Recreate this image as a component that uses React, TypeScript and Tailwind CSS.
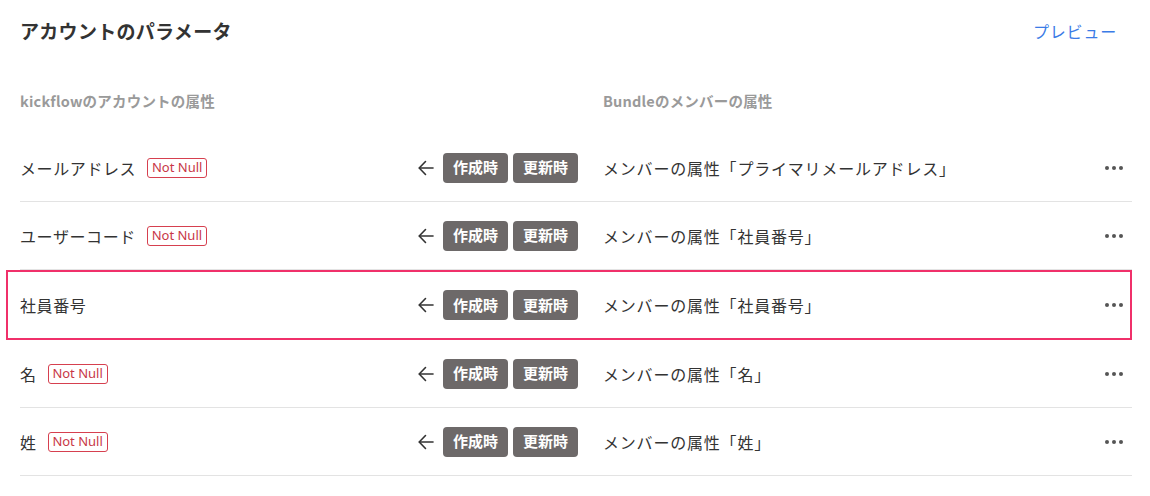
import React from 'react';

type Row = {
  label: string;
  notNull?: boolean;
  source: string;
  highlighted?: boolean;
};

const rows: Row[] = [
  { label: 'メールアドレス', notNull: true, source: 'メンバーの属性「プライマリメールアドレス」' },
  { label: 'ユーザーコード', notNull: true, source: 'メンバーの属性「社員番号」' },
  { label: '社員番号', source: 'メンバーの属性「社員番号」', highlighted: true },
  { label: '名', notNull: true, source: 'メンバーの属性「名」' },
  { label: '姓', notNull: true, source: 'メンバーの属性「姓」' },
];

function ArrowLeftIcon() {
  return (
    <svg width="16" height="16" viewBox="0 0 16 16" fill="none" stroke="#333" strokeWidth="1.6" strokeLinecap="round" strokeLinejoin="round">
      <path d="M15 8H1.5" />
      <path d="M7.5 1.5L1.2 8l6.3 6.5" />
    </svg>
  );
}

function DotsIcon() {
  return (
    <svg width="18" height="4" viewBox="0 0 18 4" fill="#555">
      <circle cx="2" cy="2" r="2" />
      <circle cx="9" cy="2" r="2" />
      <circle cx="16" cy="2" r="2" />
    </svg>
  );
}

function TimingBadge({ children }: { children: React.ReactNode }) {
  return (
    <span className="inline-flex items-center justify-center w-[65px] h-[30px] rounded-[4px] bg-[#6d6969] text-white text-[15px] font-bold">
      {children}
    </span>
  );
}

function MappingRow({ row }: { row: Row }) {
  return (
    <div
      className={
        row.highlighted
          ? 'flex items-center h-[70px] -ml-[14px] pl-[12px] border-2 border-[#f0306a]'
          : 'flex items-center h-[68px] border-b border-[#e3e3e3]'
      }
    >
      {/* Label */}
      <div className="w-[398px] flex items-center gap-[11px] text-[16px] tracking-[0.6px] text-[#333]">
        <span>{row.label}</span>
        {row.notNull && (
          <span className="inline-flex items-center justify-center w-[60px] h-[20px] rounded-[3px] border border-[#d6404f] text-[#c83747] text-[13px] leading-none tracking-normal font-['Noto_Sans',sans-serif]">
            Not Null
          </span>
        )}
      </div>

      {/* Arrow and timing */}
      <div className="w-[185px] flex items-center">
        <ArrowLeftIcon />
        <div className="ml-[9px] flex gap-[5px]">
          <TimingBadge>作成時</TimingBadge>
          <TimingBadge>更新時</TimingBadge>
        </div>
      </div>

      {/* Source */}
      <div className="flex-1 text-[16px] tracking-[0.8px] text-[#333]">{row.source}</div>

      <div className={row.highlighted ? 'pr-[7px] flex items-center' : 'pr-[9px] flex items-center'}>
        <DotsIcon />
      </div>
    </div>
  );
}

export default function App() {
  return (
    <div className="w-[1150px] h-[496px] bg-white pl-5 pr-[18px] font-['Noto_Sans_CJK_JP','Noto_Sans',sans-serif]">
      {/* Header */}
      <div className="h-[62px] flex items-center justify-between">
        <h1 className="text-[19px] font-bold text-[#333] tracking-[0.3px]">アカウントのパラメータ</h1>
        <button className="mr-[15px] text-[16px] tracking-[0.8px] text-[#3a7be6]">プレビュー</button>
      </div>

      {/* Column headers */}
      <div className="h-[72px] pt-[29px] flex text-[14.5px] leading-[20px] font-bold text-[#9a9a9a] tracking-[0.2px]">
        <div className="w-[583px]">kickflowのアカウントの属性</div>
        <div>Bundleのメンバーの属性</div>
      </div>

      {rows.map((row) => (
        <MappingRow key={row.label} row={row} />
      ))}
    </div>
  );
}
